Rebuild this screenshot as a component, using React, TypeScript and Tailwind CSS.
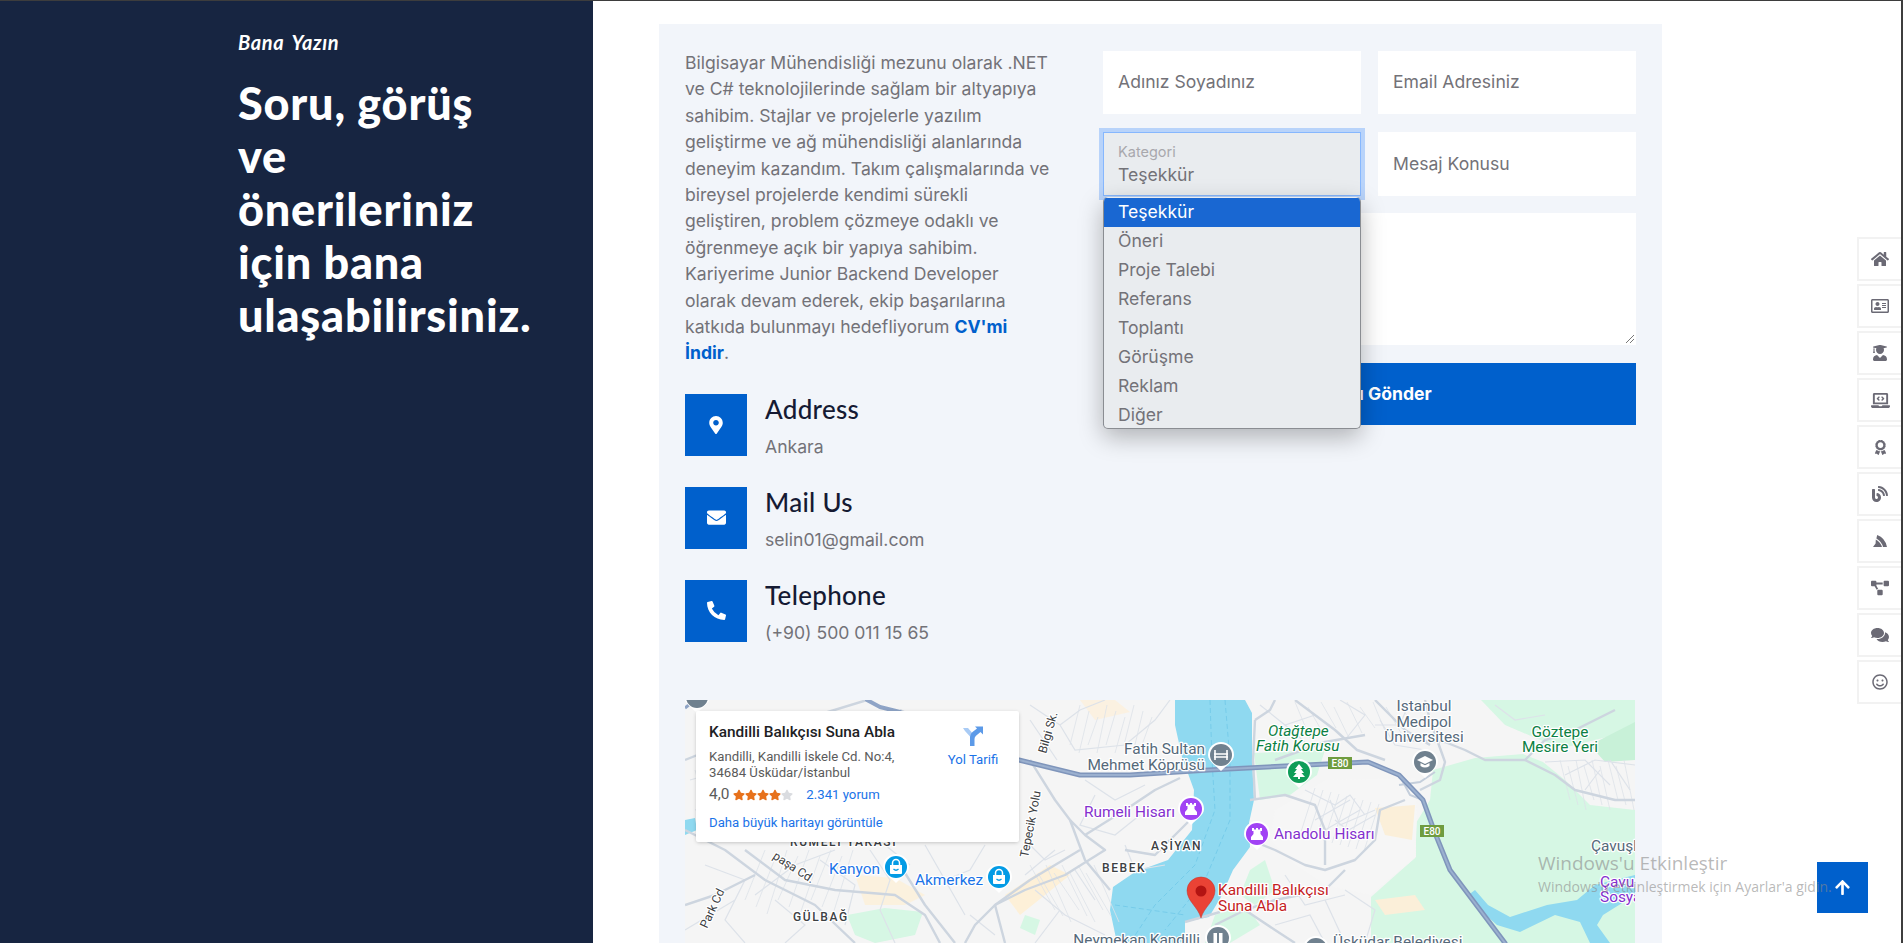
import React from "react";
import {
  FaHome, FaRegAddressCard, FaUserGraduate, FaLaptopCode, FaAward, FaBlog, FaProjectDiagram, FaComments, FaRegSmile,
  FaMapMarkerAlt, FaEnvelope, FaPhoneAlt, FaArrowUp, FaStar,
} from "react-icons/fa";

const para = [
  "Bilgisayar Mühendisliği mezunu olarak .NET",
  "ve C# teknolojilerinde sağlam bir altyapıya",
  "sahibim. Stajlar ve projelerle yazılım",
  "geliştirme ve ağ mühendisliği alanlarında",
  "deneyim kazandım. Takım çalışmalarında ve",
  "bireysel projelerde kendimi sürekli",
  "geliştiren, problem çözmeye odaklı ve",
  "öğrenmeye açık bir yapıya sahibim.",
  "Kariyerime Junior Backend Developer",
  "olarak devam ederek, ekip başarılarına",
];

const options = ["Teşekkür", "Öneri", "Proje Talebi", "Referans", "Toplantı", "Görüşme", "Reklam", "Diğer"];

const info = [
  { icon: <FaMapMarkerAlt size={18} />, title: "Address", sub: "Ankara" },
  { icon: <FaEnvelope size={19} />, title: "Mail Us", sub: "selin01@gmail.com" },
  { icon: <FaPhoneAlt size={19} />, title: "Telephone", sub: "(+90) 500 011 15 65" },
];

const Fin = () => (
  <svg width="14" height="12" viewBox="0 0 14 12" fill="currentColor">
    <path d="M4.2 0 Q12 2.6 14 12 L10 12 Q8.8 6.5 3.4 3.4 Z" />
    <path d="M2.8 4.4 Q7.6 7 9 12 L0 12 L2.6 8.6 Z" />
  </svg>
);

const rail = [
  <FaHome size={18} />, <FaRegAddressCard size={18} />, <FaUserGraduate size={16} />, <FaLaptopCode size={19} />,
  <FaAward size={15} />, <FaBlog size={16} />, <Fin />, <FaProjectDiagram size={18} />,
  <FaComments size={18} />, <FaRegSmile size={16} />,
];

const majorRoads = [
  "M0 60 L30 48 L60 30 L110 22 L182 0",
  "M0 130 L40 150 L80 180 L130 205 L170 243",
  "M60 150 L100 180 L150 190 L210 195 L240 215 L255 243",
  "M0 205 L30 195 L70 175",
  "M215 165 L240 205 L270 243",
  "M215 10 L275 40 L334 60",
  "M345 60 L370 100 L385 120 L400 135 L420 150 L380 175 L340 190 L310 205 L320 243",
  "M310 205 L290 225 L280 243",
  "M440 150 L470 155 L490 135 L505 120",
  "M400 135 L440 110 L470 90 L495 78",
  "M310 205 L345 180 L395 150",
  "M425 190 L400 160 L385 120",
  "M565 140 L590 150 L620 165 L640 170 L670 160 L690 140 L695 110 L720 100",
  "M565 100 L600 95 L630 105 L640 130 L640 165",
  "M570 20 L585 10 L590 0",
  "M570 20 L568 60 L570 100",
  "M610 0 L650 30 L672 50 L700 60",
  "M740 0 L745 20 L760 62 L755 80 L735 90",
  "M720 40 L760 42 L780 50 L800 60 L840 60 L860 40 L890 30 L930 10",
  "M840 60 L870 75 L890 90 L930 100 L950 100",
  "M530 225 L560 210 L590 200 L640 190 L660 170",
  "M560 210 L590 230 L610 243",
  "M500 222 L535 212",
  "M590 60 L640 42 L680 35",
  "M690 0 L720 30 L745 45",
];

const minorRoads = [
  "M5 80 L40 70 L70 90 M10 110 L50 100 L80 130 M20 165 L60 180 L40 220 L60 243 M0 230 L25 215 L50 200",
  "M70 195 L110 165 L150 150 M90 200 L120 225 L100 243 M135 160 L170 185 L160 225 M185 150 L205 180 L195 210 L210 243",
  "M200 145 L225 165 M240 145 L260 180 L285 170 L300 145 M260 180 L280 215 M285 215 L310 235",
  "M345 5 L375 25 L395 10 L420 0 M375 25 L390 50 L440 45 L470 20 L485 0 M345 20 L372 60",
  "M400 80 L430 100 L460 85 M410 95 L395 125 L430 135 L455 115 M440 145 L450 170 L480 165 M340 140 L360 160 L380 150",
  "M350 190 L380 215 L420 235 M390 170 L410 200 M375 210 L350 243 M340 175 L370 150",
  "M620 90 L650 105 L665 95 L680 115 M645 100 L655 125 L690 110 M650 120 L675 140 M630 120 L665 100 M640 130 L675 110 M655 135 L690 115",
  "M600 175 L620 205 L660 195 M640 200 L660 243 M590 225 L625 215 L640 243 M660 190 L690 210 L680 243",
  "M810 5 L830 20 L860 15 M860 62 L900 60 L925 85 M880 75 L910 60 L950 65 M900 90 L915 70 M925 60 L945 90",
  "M575 5 L600 25 L630 15 M655 0 L680 15 L660 40 M690 25 L715 25 L725 0 M695 20 L710 45 L740 50 M600 25 L620 42",
];

const streetGrid: string[] = [];
for (let i = 0; i < 9; i++) {
  streetGrid.push(`M${630 + i * 8} ${88 + i * 2} L${615 + i * 8} ${135 + i * 2}`);
  streetGrid.push(`M${10 + i * 12} ${70 + (i % 3) * 10} L${28 + i * 12} ${135 - (i % 4) * 8}`);
  streetGrid.push(`M${80 + i * 11} ${150 + (i % 2) * 6} L${60 + i * 11} ${200 + (i % 3) * 7}`);
  streetGrid.push(`M${395 + i * 9} ${5 + (i % 3) * 6} L${385 + i * 9} ${45 + (i % 2) * 8}`);
  streetGrid.push(`M${345 + i * 8} ${165 + (i % 2) * 8} L${370 + i * 8} ${210 + (i % 3) * 6}`);
  streetGrid.push(`M${610 + i * 13} ${2 + (i % 2) * 5} L${625 + i * 13} ${38 - (i % 3) * 5}`);
  streetGrid.push(`M${875 + i * 8} ${60 + (i % 2) * 6} L${885 + i * 8} ${100 + (i % 3) * 5}`);
}

function Halo({ x, y, children, fill, size = 15.4, anchor = "start", weight = 400, italic = false, spacing = 0, rotate }: {
  x: number; y: number; children: React.ReactNode; fill: string; size?: number; anchor?: "start" | "middle" | "end";
  weight?: number; italic?: boolean; spacing?: number; rotate?: number;
}) {
  return (
    <text
      x={x}
      y={y}
      fill={fill}
      fontSize={size}
      textAnchor={anchor}
      fontWeight={weight}
      fontStyle={italic ? "italic" : "normal"}
      letterSpacing={spacing}
      stroke="#ffffff"
      strokeWidth={2.5}
      strokeLinejoin="round"
      paintOrder="stroke"
      transform={rotate !== undefined ? `rotate(${rotate} ${x} ${y})` : undefined}
    >
      {children}
    </text>
  );
}

function Pin({ x, y, color, children }: { x: number; y: number; color: string; children?: React.ReactNode }) {
  return (
    <g transform={`translate(${x} ${y})`}>
      <path d="M-13 0 A13 13 0 1 1 13 0 C13 6 6 10 0 16 C-6 10 -13 6 -13 0 Z" fill="#ffffff" />
      <circle r="11" fill={color} />
      {children}
    </g>
  );
}

const Castle = () => <path d="M-6 6 L6 6 L6 3 L3.5 0 L3.5 -3 L5 -3 L5 -6 L3 -6 L3 -4.5 L1 -4.5 L1 -6 L-1 -6 L-1 -4.5 L-3 -4.5 L-3 -6 L-5 -6 L-5 -3 L-3.5 -3 L-3.5 0 L-6 3 Z" fill="#ffffff" />;
const Bag = () => (
  <g>
    <path d="M-6 -2 H6 L6 6 A1 1 0 0 1 5 7 H-5 A1 1 0 0 1 -6 6 Z" fill="#ffffff" />
    <path d="M-3.5 -2 V-4 A3.5 3.5 0 0 1 3.5 -4 V-2" fill="none" stroke="#ffffff" strokeWidth="1.5" />
    <path d="M-2.5 2 Q0 4.5 2.5 2" fill="none" stroke="#039be5" strokeWidth="1.2" />
  </g>
);

function MapArea() {
  return (
    <div className="relative h-[243px] w-[950px] overflow-hidden bg-[#f5f5f5]" style={{ fontFamily: "Roboto, sans-serif" }}>
      <svg width="950" height="243" viewBox="0 0 950 243" className="block">
        <g fill="#d6f7e4">
          <path d="M748 70 L790 58 L838 54 L858 62 L880 80 L905 105 L950 110 L950 243 L686 243 L686 197 L731 157 L731 123 L745 100 Z" />
          <path d="M796 0 L950 0 L950 45 L925 55 L860 42 L820 25 Z" />
          <path d="M569 53 L640 50 L632 75 L605 95 L575 100 Z" />
          <path d="M162 215 L200 208 L238 212 L230 235 L190 243 L170 235 Z" />
          <path d="M565 170 L580 160 L590 190 L570 205 L555 195 Z" />
          <path d="M340 215 L355 220 L350 235 L335 228 Z" />
          <path d="M530 215 L560 205 L575 225 L545 243 L520 243 Z" />
        </g>
        <path d="M870 50 L950 30 L950 95 L905 85 L880 65 Z" fill="#f5f5f5" />
        <path d="M905 45 L950 22 L950 60 L920 62 Z" fill="#c8f1d8" />
        <path d="M640 80 L730 78 L732 120 L730 158 L686 195 L640 185 L610 165 L585 140 L590 110 Z" fill="#f6f6f6" />
        <path d="M690 108 L730 105 L727 140 L700 135 Z" fill="#fbefd9" />
        <path d="M690 200 L730 195 L740 210 L700 215 Z" fill="#fbefd9" />
        <path d="M170 175 L210 178 L240 195 L220 205 L180 205 Z" fill="#fdf0d8" opacity="0.8" />
        <path d="M320 195 L365 165 L385 175 L335 215 Z" fill="#fdf0d8" />
        <path d="M395 0 L430 0 L445 12 L410 20 Z" fill="#fdf0d8" opacity="0.7" />
        <path d="M490 0 L560 0 L567 13 L567 57 L569 100 L564 123 L565 147 L548 170 L536 197 L524 217 L500 222 L500 243 L432 243 L425 210 L428 187 L450 172 L483 160 L507 130 L509 90 L497 57 L490 25 Z" fill="#8fd9f0" />
        <path d="M790 190 L803 205 L825 217 L862 205 L892 200 L910 185 L950 175 L950 195 L918 215 L912 225 L925 243 L905 243 L895 222 L870 215 L835 232 L812 225 L795 210 L782 196 Z" fill="#8fd9f0" />
        <path d="M0 120 L10 118 L12 130 L0 135 Z" fill="#8fd9f0" />
        <g fill="none" stroke="#6cc6e6" strokeWidth="0.7" strokeDasharray="5 3">
          <path d="M525 0 L527 60 L530 110 L510 165 L470 205 L445 243" />
          <path d="M540 0 L545 60 L545 120 L520 180 L480 230" />
          <path d="M430 205 L500 215" />
        </g>
        <g fill="none" stroke="#dde2e9" strokeWidth="0.8">{streetGrid.map((d, i) => <path key={i} d={d} />)}</g>
        <g fill="none" stroke="#dde2e9" strokeWidth="1.2">{minorRoads.map((d, i) => <path key={i} d={d} />)}</g>
        <g fill="none" stroke="#cdd5df" strokeWidth="2.4" strokeLinejoin="round">{majorRoads.map((d, i) => <path key={i} d={d} />)}</g>
        <path d="M716 78 L725 95 L738 100 M714 85 L735 82 L750 72" fill="none" stroke="#c4cedb" strokeWidth="2" />
        <g fill="none" strokeLinecap="round" strokeLinejoin="round">
          <path d="M334 60 L395 75 L445 75 L524 70 L600 66 L683 62 L714 75 L738 100 L750 133 L765 170 L820 243" stroke="#7f95bb" strokeWidth="5" />
          <path d="M334 60 L395 75 L445 75 L524 70 L600 66 L683 62 L714 75 L738 100 L750 133 L765 170 L820 243" stroke="#9bb0cf" strokeWidth="2" />
          <path d="M182 0 L195 7 L215 12" stroke="#8fa4c6" strokeWidth="4" />
        </g>
        <path d="M0 8 L25 -12" stroke="#8fa4c6" strokeWidth="3" />

        <Halo x={87} y={158} fill="#3c4043" size={12} rotate={33}>paşa Cd.</Halo>
        <Halo x={22} y={229} fill="#3c4043" size={12} rotate={-65}>Park Cd</Halo>
        <Halo x={108} y={221} fill="#3c4043" size={12} weight={500} spacing={1.6}>GÜLBAĞ</Halo>
        <Halo x={105} y={146} fill="#3c4043" size={12} weight={500} spacing={1.6}>RUMELİ YAKASI</Halo>
        <Halo x={144} y={174} fill="#1a73e8">Kanyon</Halo>
        <Halo x={230} y={185} fill="#1a73e8">Akmerkez</Halo>
        <Halo x={361} y={54} fill="#3c4043" size={12} rotate={-74}>Bilgi Sk.</Halo>
        <Halo x={343} y={158} fill="#3c4043" size={12} rotate={-79}>Tepecik Yolu</Halo>
        <Halo x={520} y={54} fill="#55697a" anchor="end">Fatih Sultan</Halo>
        <Halo x={520} y={70} fill="#55697a" anchor="end">Mehmet Köprüsü</Halo>
        <Halo x={399} y={117} fill="#8430ce">Rumeli Hisarı</Halo>
        <Halo x={466} y={150} fill="#3c4043" size={12} weight={500} spacing={1.6}>AŞİYAN</Halo>
        <Halo x={417} y={172} fill="#3c4043" size={12} weight={500} spacing={1.6}>BEBEK</Halo>
        <Halo x={515} y={245} fill="#55697a" anchor="end">Neymekan Kandilli</Halo>
        <Halo x={583} y={36} fill="#0b8043" italic>Otağtepe</Halo>
        <Halo x={571} y={51} fill="#0b8043" italic>Fatih Korusu</Halo>
        <Halo x={739} y={11} fill="#55697a" anchor="middle">İstanbul</Halo>
        <Halo x={739} y={27} fill="#55697a" anchor="middle">Medipol</Halo>
        <Halo x={739} y={42} fill="#55697a" anchor="middle">Üniversitesi</Halo>
        <Halo x={875} y={37} fill="#0b8043" anchor="middle">Göztepe</Halo>
        <Halo x={875} y={52} fill="#0b8043" anchor="middle">Mesire Yeri</Halo>
        <Halo x={589} y={139} fill="#8430ce">Anadolu Hisarı</Halo>
        <Halo x={533} y={195} fill="#c5221f">Kandilli Balıkçısı</Halo>
        <Halo x={533} y={211} fill="#c5221f">Suna Abla</Halo>
        <Halo x={906} y={151} fill="#55697a">Çavuşbaşı</Halo>
        <Halo x={915} y={187} fill="#8430ce">Çavuşbaşı</Halo>
        <Halo x={915} y={202} fill="#8430ce">Sosyal</Halo>
        <Halo x={648} y={247} fill="#55697a">Üsküdar Belediyesi</Halo>

        <g>
          <rect x="643" y="57" width="24" height="12" fill="#6f9c3f" />
          <text x="655" y="66.5" fill="#fff" fontSize="10" textAnchor="middle" fontWeight="500">E80</text>
          <rect x="735" y="125" width="24" height="12" fill="#6f9c3f" />
          <text x="747" y="134.5" fill="#fff" fontSize="10" textAnchor="middle" fontWeight="500">E80</text>
        </g>

        <Pin x={12} y={-3} color="#70818f" />
        <Pin x={211} y={167} color="#039be5"><Bag /></Pin>
        <Pin x={314} y={177} color="#039be5"><Bag /></Pin>
        <Pin x={506} y={109} color="#a142f4"><Castle /></Pin>
        <Pin x={572} y={134} color="#a142f4"><Castle /></Pin>
        <Pin x={536} y={55} color="#70818f">
          <path d="M-6 -5 V5 M6 -5 V5 M-7 -1 H7 M-7 2 H7" stroke="#fff" strokeWidth="1.6" fill="none" />
        </Pin>
        <Pin x={614} y={72} color="#0f9d58">
          <path d="M0 -8 L4 -3 H2 L5 1 H2.5 L6 5 H1 V7 H-1 V5 H-6 L-2.5 1 H-5 L-2 -3 H-4 Z" fill="#fff" />
        </Pin>
        <Pin x={740} y={62} color="#70818f">
          <path d="M0 -6 L8 -2 L0 2 L-8 -2 Z M-4.5 1 V4 Q0 7 4.5 4 V1 L0 3.3 Z" fill="#fff" />
        </Pin>
        <Pin x={533} y={238} color="#70818f">
          <rect x="-4.5" y="-5" width="3.5" height="10" fill="#fff" />
          <rect x="1" y="-5" width="3.5" height="10" fill="#fff" />
        </Pin>
        <Pin x={631} y={249} color="#70818f" />
        <g transform="translate(516 177)">
          <path d="M0 41 C-3 30 -14 24 -14 13.5 A14 13.5 0 1 1 14 13.5 C14 24 3 30 0 41 Z" fill="#ea4335" stroke="#c5332a" strokeWidth="0.5" />
          <circle cy="14" r="5.5" fill="#b31412" />
        </g>
      </svg>

      <div className="absolute left-[11px] top-[11px] h-[131px] w-[323px] rounded-[2px] bg-white shadow-[0_1px_4px_-1px_rgba(0,0,0,0.3)]">
        <div className="absolute left-[13px] top-[11px] whitespace-nowrap text-[15.4px] font-medium leading-[20px] text-[#202124]">Kandilli Balıkçısı Suna Abla</div>
        <div className="absolute left-[13px] top-[38px] whitespace-nowrap text-[13.2px] leading-[16px] text-[#5b5b5b]">
          Kandilli, Kandilli İskele Cd. No:4,<br />34684 Üsküdar/İstanbul
        </div>
        <div className="absolute left-[13px] top-[75px] flex h-[18px] items-center whitespace-nowrap text-[#5b5b5b]">
          <span className="text-[15.4px]">4,0</span>
          <span className="ml-[4px] flex w-[61px]">
            <FaStar size={12} className="text-[#e7711b]" />
            <FaStar size={12} className="text-[#e7711b]" />
            <FaStar size={12} className="text-[#e7711b]" />
            <FaStar size={12} className="text-[#e7711b]" />
            <FaStar size={12} className="text-[#dadce0]" />
          </span>
          <span className="ml-[12px] text-[13.2px] text-[#1a73e8]">2.341 yorum</span>
        </div>
        <div className="absolute left-[13px] top-[104px] whitespace-nowrap text-[13.2px] leading-[16px] text-[#1a73e8]">Daha büyük haritayı görüntüle</div>
        <svg className="absolute left-[266px] top-[14px]" width="22" height="22" viewBox="0 0 22 22">
          <path d="M1 3 H6 L12 10 V21 H8 V11.5 L3 6 Z" fill="#a9cbf5" />
          <path d="M8 21 V12 Q8 9 10.5 7 L15 3.5 L13 1.5 H21 V9.5 L18.5 7 L14 10.8 Q12.5 12 12.5 14 V21 Z" fill="#5c9ae8" />
        </svg>
        <div className="absolute left-[247px] top-[41px] w-[60px] text-center text-[13.2px] leading-[16px] text-[#1a73e8]">Yol Tarifi</div>
      </div>
    </div>
  );
}

export default function App() {
  return (
    <div className="relative h-[943px] w-full overflow-hidden bg-white" style={{ fontFamily: "Inter, sans-serif" }}>
      <div className="h-px bg-[#3d3d3d]" />
      <div className="flex h-[942px]">
        <aside className="w-[593px] shrink-0 bg-[#172541] pl-[238px] pt-[29px] text-white" style={{ fontFamily: "Lato, sans-serif" }}>
          <div className="text-[20px] font-bold italic leading-[24px] tracking-[0.6px] [word-spacing:3px]">Bana Yazın</div>
          <h1 className="mt-[23px] text-[45px] font-black leading-[53px] tracking-[0.8px]">
            Soru, görüş<br />ve<br />önerileriniz<br />için bana<br />ulaşabilirsiniz.
          </h1>
        </aside>

        <main className="relative flex-1 pl-[66px] pt-[23px]">
          <div className="h-[950px] w-[1003px] bg-[#f2f5fa] pl-[26px] pt-[27px]">
            <div className="flex">
              <div className="w-[418px] shrink-0">
                <p className="-mt-px whitespace-nowrap text-[17.6px] leading-[26.4px] text-[#737278]">
                  {para.map((l) => (
                    <React.Fragment key={l}>{l}<br /></React.Fragment>
                  ))}
                  katkıda bulunmayı hedefliyorum <b className="font-bold text-[#0060cc]">CV'mi</b><br />
                  <b className="font-bold text-[#0060cc]">İndir</b>.
                </p>
                <div className="mt-[27px] flex flex-col gap-[31px]">
                  {info.map((it) => (
                    <div key={it.title} className="flex h-[62px]">
                      <div className="flex h-[62px] w-[62px] items-center justify-center bg-[#0060cc] text-white">{it.icon}</div>
                      <div className="ml-[18px]">
                        <div className="text-[26px] font-medium leading-[30px] tracking-[0.3px] text-[#151a33]" style={{ fontFamily: "Lato, sans-serif" }}>{it.title}</div>
                        <div className="mt-[11px] text-[17.6px] leading-[24px] text-[#737278]">{it.sub}</div>
                      </div>
                    </div>
                  ))}
                </div>
              </div>

              <div className="relative w-[533px] shrink-0">
                <div className="grid grid-cols-2 gap-x-[17px] gap-y-[18px] text-[17.6px]">
                  <div className="flex h-[63px] items-center bg-white pl-[15px] text-[#737278]">Adınız Soyadınız</div>
                  <div className="flex h-[63px] items-center bg-white pl-[15px] text-[#737278]">Email Adresiniz</div>
                  <div className="relative h-[64px] border border-[#86b7fe] bg-[#e9ecef] pl-[14px] shadow-[0_0_0_4px_rgba(13,110,253,0.25)]">
                    <div className="mt-[10px] text-[14.5px] leading-[18px] text-[#a8a8ad]">Kategori</div>
                    <div className="mt-[3px] leading-[22px] text-[#737278]">Teşekkür</div>
                  </div>
                  <div className="flex h-[64px] items-center bg-white pl-[15px] text-[#737278]">Mesaj Konusu</div>
                  <div className="relative col-span-2 -mt-px h-[132px] bg-white">
                    <svg className="absolute bottom-[1px] right-[1px]" width="10" height="10" viewBox="0 0 10 10">
                      <path d="M9 1 L1 9 M9 5 L5 9" stroke="#777" strokeWidth="1" />
                    </svg>
                  </div>
                  <div className="col-span-2 flex h-[62px] items-center justify-center bg-[#0060cc] font-bold text-white">Mesajı Gönder</div>
                </div>

                <div className="absolute left-0 top-[146px] h-[232px] w-[258px] overflow-hidden rounded-[5px] border-x border-b border-[#8a8d92] bg-[#e9ecef] pt-px text-[17.6px] shadow-[0_8px_24px_rgba(0,0,0,0.28)]">
                  {options.map((o, i) => (
                    <div
                      key={o}
                      className={
                        i === 0
                          ? "flex h-[29px] items-center bg-[#1967d2] pl-[14px] text-white"
                          : "flex h-[29px] items-center pl-[14px] text-[#737278]"
                      }
                    >
                      {o}
                    </div>
                  ))}
                </div>
              </div>
            </div>

            <div className="mt-[58px]">
              <MapArea />
            </div>
          </div>
        </main>

        <div className="w-[2px] shrink-0 bg-[#3d3d3d]" />
      </div>

      <nav className="absolute right-[2px] top-[237px] flex flex-col gap-[3px]">
        {rail.map((ic, i) => (
          <div key={i} className="flex h-[44px] w-[44px] items-center justify-center border-y-2 border-l-2 border-[#f2f2f2] bg-white text-[#6b6a75]">
            {ic}
          </div>
        ))}
      </nav>

      <div className="absolute left-[1817px] top-[862px] flex h-[51px] w-[51px] items-center justify-center bg-[#0060cc] text-white">
        <FaArrowUp size={17} />
      </div>

      <div className="pointer-events-none absolute left-[1538px] top-[850px] whitespace-nowrap text-[#8a8a8a]/60" style={{ fontFamily: "'Open Sans', sans-serif" }}>
        <div className="text-[19px] leading-[27px]">Windows'u Etkinleştir</div>
        <div className="text-[14px] leading-[20px]">Windows'u etkinleştirmek için Ayarlar'a gidin.</div>
      </div>
    </div>
  );
}
